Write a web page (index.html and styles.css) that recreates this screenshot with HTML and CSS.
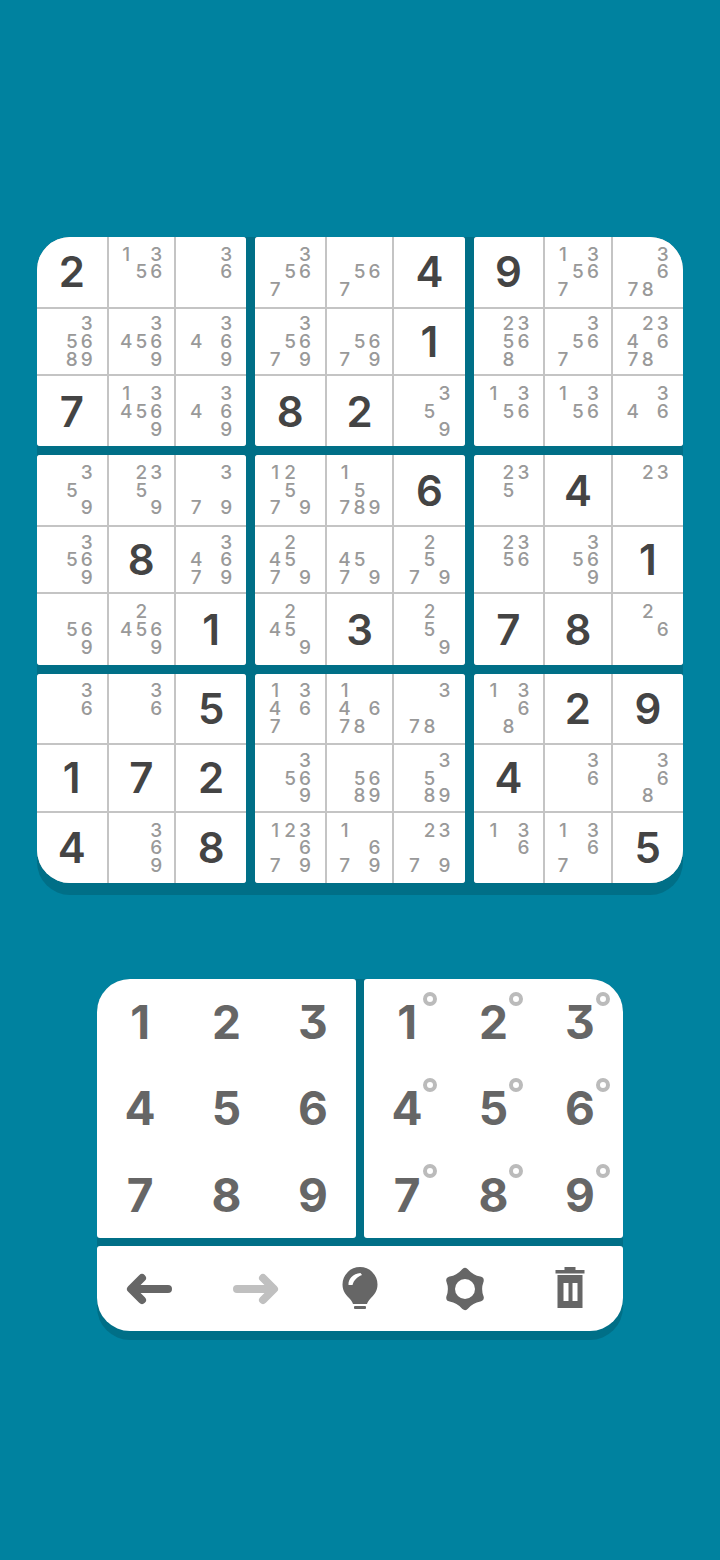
FILE: index.html
```html
<!DOCTYPE html>
<html lang="en">
<head>
<meta charset="utf-8">
<title>Sudoku</title>
<link rel="stylesheet" href="styles.css">
</head>
<body>
<main class="page">
<section class="board">
<div class="box tl">
<div class="cell given">2</div>
<div class="cell notes"><i class="n1">1</i><i class="n3">3</i><i class="n5">5</i><i class="n6">6</i></div>
<div class="cell notes"><i class="n3">3</i><i class="n6">6</i></div>
<div class="cell notes"><i class="n3">3</i><i class="n5">5</i><i class="n6">6</i><i class="n8">8</i><i class="n9">9</i></div>
<div class="cell notes"><i class="n3">3</i><i class="n4">4</i><i class="n5">5</i><i class="n6">6</i><i class="n9">9</i></div>
<div class="cell notes"><i class="n3">3</i><i class="n4">4</i><i class="n6">6</i><i class="n9">9</i></div>
<div class="cell given">7</div>
<div class="cell notes"><i class="n1">1</i><i class="n3">3</i><i class="n4">4</i><i class="n5">5</i><i class="n6">6</i><i class="n9">9</i></div>
<div class="cell notes"><i class="n3">3</i><i class="n4">4</i><i class="n6">6</i><i class="n9">9</i></div>
</div>
<div class="box">
<div class="cell notes"><i class="n3">3</i><i class="n5">5</i><i class="n6">6</i><i class="n7">7</i></div>
<div class="cell notes"><i class="n5">5</i><i class="n6">6</i><i class="n7">7</i></div>
<div class="cell given">4</div>
<div class="cell notes"><i class="n3">3</i><i class="n5">5</i><i class="n6">6</i><i class="n7">7</i><i class="n9">9</i></div>
<div class="cell notes"><i class="n5">5</i><i class="n6">6</i><i class="n7">7</i><i class="n9">9</i></div>
<div class="cell given">1</div>
<div class="cell given">8</div>
<div class="cell given">2</div>
<div class="cell notes"><i class="n3">3</i><i class="n5">5</i><i class="n9">9</i></div>
</div>
<div class="box tr">
<div class="cell given">9</div>
<div class="cell notes"><i class="n1">1</i><i class="n3">3</i><i class="n5">5</i><i class="n6">6</i><i class="n7">7</i></div>
<div class="cell notes"><i class="n3">3</i><i class="n6">6</i><i class="n7">7</i><i class="n8">8</i></div>
<div class="cell notes"><i class="n2">2</i><i class="n3">3</i><i class="n5">5</i><i class="n6">6</i><i class="n8">8</i></div>
<div class="cell notes"><i class="n3">3</i><i class="n5">5</i><i class="n6">6</i><i class="n7">7</i></div>
<div class="cell notes"><i class="n2">2</i><i class="n3">3</i><i class="n4">4</i><i class="n6">6</i><i class="n7">7</i><i class="n8">8</i></div>
<div class="cell notes"><i class="n1">1</i><i class="n3">3</i><i class="n5">5</i><i class="n6">6</i></div>
<div class="cell notes"><i class="n1">1</i><i class="n3">3</i><i class="n5">5</i><i class="n6">6</i></div>
<div class="cell notes"><i class="n3">3</i><i class="n4">4</i><i class="n6">6</i></div>
</div>
<div class="box">
<div class="cell notes"><i class="n3">3</i><i class="n5">5</i><i class="n9">9</i></div>
<div class="cell notes"><i class="n2">2</i><i class="n3">3</i><i class="n5">5</i><i class="n9">9</i></div>
<div class="cell notes"><i class="n3">3</i><i class="n7">7</i><i class="n9">9</i></div>
<div class="cell notes"><i class="n3">3</i><i class="n5">5</i><i class="n6">6</i><i class="n9">9</i></div>
<div class="cell given">8</div>
<div class="cell notes"><i class="n3">3</i><i class="n4">4</i><i class="n6">6</i><i class="n7">7</i><i class="n9">9</i></div>
<div class="cell notes"><i class="n5">5</i><i class="n6">6</i><i class="n9">9</i></div>
<div class="cell notes"><i class="n2">2</i><i class="n4">4</i><i class="n5">5</i><i class="n6">6</i><i class="n9">9</i></div>
<div class="cell given">1</div>
</div>
<div class="box">
<div class="cell notes"><i class="n1">1</i><i class="n2">2</i><i class="n5">5</i><i class="n7">7</i><i class="n9">9</i></div>
<div class="cell notes"><i class="n1">1</i><i class="n5">5</i><i class="n7">7</i><i class="n8">8</i><i class="n9">9</i></div>
<div class="cell given">6</div>
<div class="cell notes"><i class="n2">2</i><i class="n4">4</i><i class="n5">5</i><i class="n7">7</i><i class="n9">9</i></div>
<div class="cell notes"><i class="n4">4</i><i class="n5">5</i><i class="n7">7</i><i class="n9">9</i></div>
<div class="cell notes"><i class="n2">2</i><i class="n5">5</i><i class="n7">7</i><i class="n9">9</i></div>
<div class="cell notes"><i class="n2">2</i><i class="n4">4</i><i class="n5">5</i><i class="n9">9</i></div>
<div class="cell given">3</div>
<div class="cell notes"><i class="n2">2</i><i class="n5">5</i><i class="n9">9</i></div>
</div>
<div class="box">
<div class="cell notes"><i class="n2">2</i><i class="n3">3</i><i class="n5">5</i></div>
<div class="cell given">4</div>
<div class="cell notes"><i class="n2">2</i><i class="n3">3</i></div>
<div class="cell notes"><i class="n2">2</i><i class="n3">3</i><i class="n5">5</i><i class="n6">6</i></div>
<div class="cell notes"><i class="n3">3</i><i class="n5">5</i><i class="n6">6</i><i class="n9">9</i></div>
<div class="cell given">1</div>
<div class="cell given">7</div>
<div class="cell given">8</div>
<div class="cell notes"><i class="n2">2</i><i class="n6">6</i></div>
</div>
<div class="box bl">
<div class="cell notes"><i class="n3">3</i><i class="n6">6</i></div>
<div class="cell notes"><i class="n3">3</i><i class="n6">6</i></div>
<div class="cell given">5</div>
<div class="cell given">1</div>
<div class="cell given">7</div>
<div class="cell given">2</div>
<div class="cell given">4</div>
<div class="cell notes"><i class="n3">3</i><i class="n6">6</i><i class="n9">9</i></div>
<div class="cell given">8</div>
</div>
<div class="box">
<div class="cell notes"><i class="n1">1</i><i class="n3">3</i><i class="n4">4</i><i class="n6">6</i><i class="n7">7</i></div>
<div class="cell notes"><i class="n1">1</i><i class="n4">4</i><i class="n6">6</i><i class="n7">7</i><i class="n8">8</i></div>
<div class="cell notes"><i class="n3">3</i><i class="n7">7</i><i class="n8">8</i></div>
<div class="cell notes"><i class="n3">3</i><i class="n5">5</i><i class="n6">6</i><i class="n9">9</i></div>
<div class="cell notes"><i class="n5">5</i><i class="n6">6</i><i class="n8">8</i><i class="n9">9</i></div>
<div class="cell notes"><i class="n3">3</i><i class="n5">5</i><i class="n8">8</i><i class="n9">9</i></div>
<div class="cell notes"><i class="n1">1</i><i class="n2">2</i><i class="n3">3</i><i class="n6">6</i><i class="n7">7</i><i class="n9">9</i></div>
<div class="cell notes"><i class="n1">1</i><i class="n6">6</i><i class="n7">7</i><i class="n9">9</i></div>
<div class="cell notes"><i class="n2">2</i><i class="n3">3</i><i class="n7">7</i><i class="n9">9</i></div>
</div>
<div class="box br">
<div class="cell notes"><i class="n1">1</i><i class="n3">3</i><i class="n6">6</i><i class="n8">8</i></div>
<div class="cell given">2</div>
<div class="cell given">9</div>
<div class="cell given">4</div>
<div class="cell notes"><i class="n3">3</i><i class="n6">6</i></div>
<div class="cell notes"><i class="n3">3</i><i class="n6">6</i><i class="n8">8</i></div>
<div class="cell notes"><i class="n1">1</i><i class="n3">3</i><i class="n6">6</i></div>
<div class="cell notes"><i class="n1">1</i><i class="n3">3</i><i class="n6">6</i><i class="n7">7</i></div>
<div class="cell given">5</div>
</div>
</section>
<section class="pad">
<div class="digits">
<div class="numgrid normal">
<div class="num">1</div><div class="num">2</div><div class="num">3</div>
<div class="num">4</div><div class="num">5</div><div class="num">6</div>
<div class="num">7</div><div class="num">8</div><div class="num">9</div>
</div>
<div class="numgrid pencil">
<div class="num">1<span class="ring"></span></div><div class="num">2<span class="ring"></span></div><div class="num">3<span class="ring"></span></div>
<div class="num">4<span class="ring"></span></div><div class="num">5<span class="ring"></span></div><div class="num">6<span class="ring"></span></div>
<div class="num">7<span class="ring"></span></div><div class="num">8<span class="ring"></span></div><div class="num">9<span class="ring"></span></div>
</div>
</div>
<div class="tools">
<button class="tool"><svg viewBox="0 0 48 48" width="48" height="48"><path class="st dk" d="M42 24H8M16 13 5 24l11 11"/></svg></button>
<button class="tool"><svg viewBox="0 0 48 48" width="48" height="48"><path class="st lt" d="M6 24h34M32 13l11 11-11 11"/></svg></button>
<button class="tool"><svg viewBox="0 0 48 48" width="48" height="48"><path class="fl" d="M24 2a17.500 17.500 0 0 1 17.500 17.500c0 7-4 11-7 14-2 2-3 4-3.500 5.500h-14c-.5-1.500-1.500-3.500-3.500-5.500-3-3-7-7-7-14A17.500 17.500 0 0 1 24 2z"/><rect class="fl" x="18" y="41" width="12" height="3" rx="1"/><path class="gl" d="M12.500 20c-.5-6 4.500-11.500 12-12l1.500 2c-5 2-8 5-9.500 10z"/></svg></button>
<button class="tool"><svg viewBox="0 0 48 48" width="48" height="48"><path class="gear" d="M24 7Q29.750 14.040 38.720 15.500 35.500 24 38.720 32.500 29.750 33.960 24 41 18.250 33.960 9.280 32.500 12.500 24 9.280 15.500 18.250 14.040 24 7z"/><circle class="gl" cx="24" cy="24" r="10"/></svg></button>
<button class="tool"><svg viewBox="0 0 48 48" width="48" height="48"><path class="fl" fill-rule="evenodd" d="M18.500 2h11v3h9v3.500h-29V5h9zM11.500 10h25v33h-25zM17.500 18v18h5V18zM26.500 18v18h5V18z"/></svg></button>
</div>
</section>
</main>
</body>
</html>
```
FILE: styles.css
```css
* { box-sizing: border-box; }
html, body { margin: 0; }
body { width: 720px; height: 1560px; background: #00829f; font-family: "Inter", "Liberation Sans", sans-serif; overflow: hidden; }
.page { display: flex; flex-direction: column; align-items: center; padding-top: 237px; }
.board { width: 646px; height: 646px; display: grid; grid-template-columns: repeat(3, 1fr); grid-template-rows: repeat(3, 1fr); gap: 9px; background: #006f87; border-radius: 33px; box-shadow: 0 12px 0 #006f87; }
.box { display: grid; grid-template-columns: 69.500px 65.500px 1fr; grid-template-rows: 69.500px 65.500px 1fr; gap: 2px; background: #c4c4c4; border-radius: 3px; overflow: hidden; }
.box.tl { border-top-left-radius: 33px; }
.box.tr { border-top-right-radius: 33px; }
.box.bl { border-bottom-left-radius: 33px; }
.box.br { border-bottom-right-radius: 33px; }
.cell { background: #fff; min-width: 0; min-height: 0; }
.given { display: flex; align-items: center; justify-content: center; padding-top: 1px; font-size: 42px; font-weight: 600; color: #444; line-height: 1; }
.notes { display: grid; grid-template-columns: repeat(3, 15px); grid-template-rows: repeat(3, 17.700px); justify-content: center; align-content: center; justify-items: center; font-size: 19px; font-weight: 500; line-height: 17.700px; color: #999; padding-top: 1px; }
.notes i { font-style: normal; }
.n1 { grid-area: 1 / 1; }
.n2 { grid-area: 1 / 2; }
.n3 { grid-area: 1 / 3; }
.n4 { grid-area: 2 / 1; }
.n5 { grid-area: 2 / 2; }
.n6 { grid-area: 2 / 3; }
.n7 { grid-area: 3 / 1; }
.n8 { grid-area: 3 / 2; }
.n9 { grid-area: 3 / 3; }
.pad { margin-top: 96px; width: 526px; display: flex; flex-direction: column; gap: 8px; background: #006f87; border-radius: 33px; box-shadow: 0 9px 0 #006f87; }
.digits { display: grid; grid-template-columns: 1fr 1fr; gap: 8px; }
.numgrid { height: 259px; background: #fff; border-radius: 3px; display: grid; grid-template-columns: repeat(3, 1fr); grid-template-rows: repeat(3, 1fr); }
.normal { border-top-left-radius: 33px; }
.pencil { border-top-right-radius: 33px; }
.num { display: flex; align-items: center; justify-content: center; position: relative; font-size: 46px; font-weight: 700; color: #666; line-height: 1; font-feature-settings: "cv09"; }
.ring { position: absolute; left: calc(50% + 16px); top: calc(50% - 30.500px); width: 14px; height: 14px; border: 4px solid #bbb; border-radius: 50%; }
.tools { height: 85px; display: flex; background: #fff; border-radius: 3px 3px 33px 33px; }
.tool { flex: 1; display: flex; align-items: center; justify-content: center; border: 0; padding: 0; background: none; }
.st { fill: none; stroke-width: 8; stroke-linecap: round; stroke-linejoin: round; }
.dk { stroke: #666; }
.lt { stroke: #c0c0c0; }
.fl { fill: #666; }
.gear { fill: #666; stroke: #666; stroke-width: 8; stroke-linejoin: round; }
.gl { fill: #fff; }
```
